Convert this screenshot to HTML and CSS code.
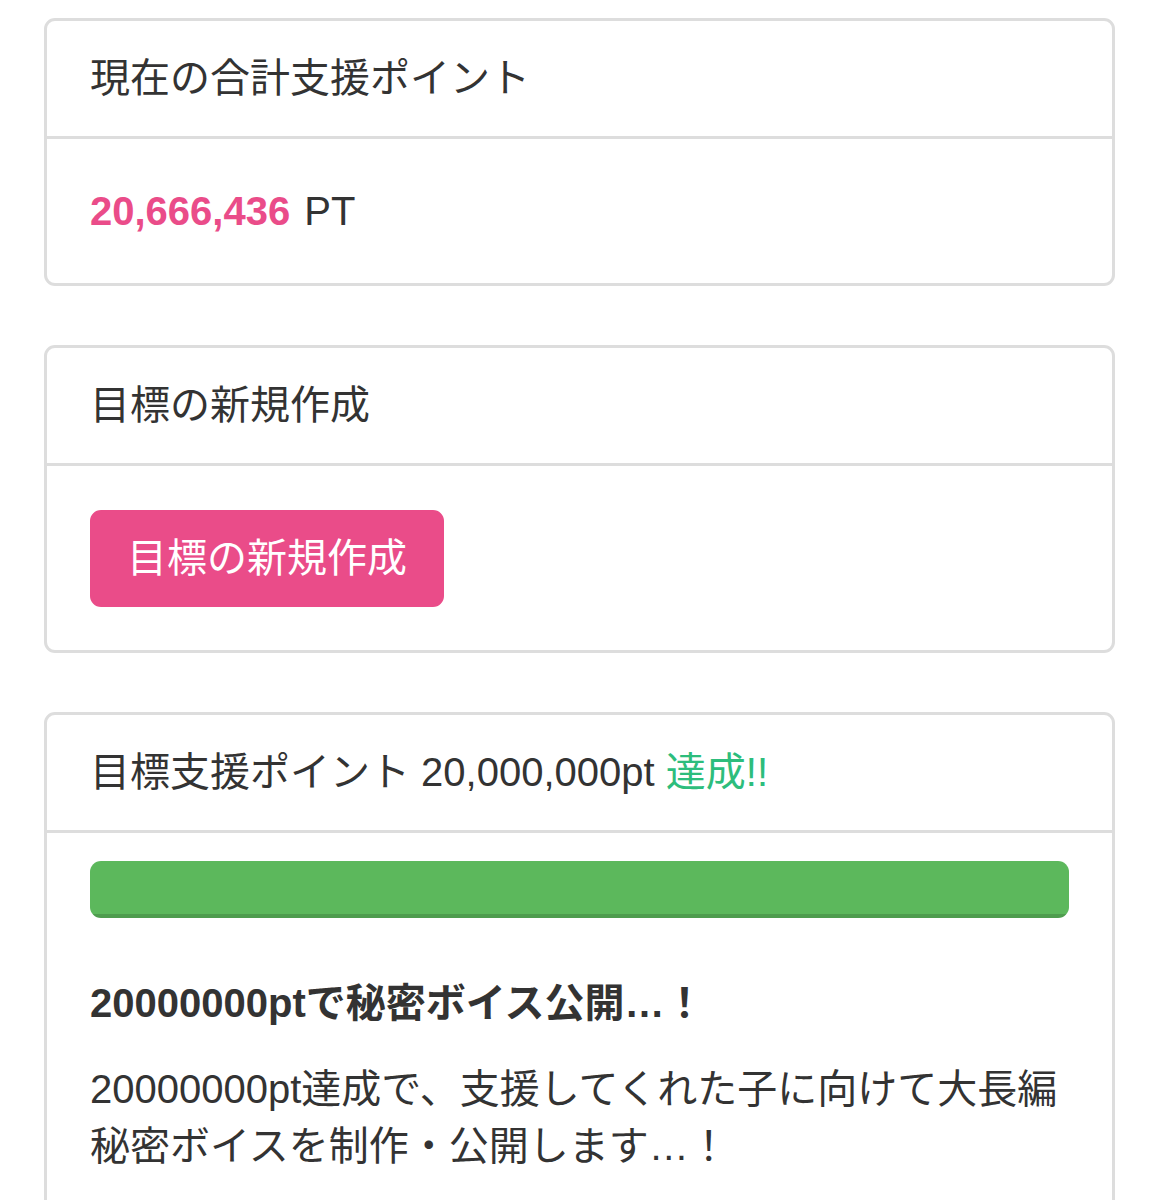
FILE: index.html
```html
<!DOCTYPE html>
<html lang="ja">

<head>
    <meta charset="utf-8">
    <meta name="viewport" content="width=device-width, initial-scale=1.0">
    <title>支援ポイント</title>
    <link rel="stylesheet" href="styles.css">
</head>

<body>
    <div class="container">
        <div class="panel">
            <div class="panel-heading">現在の合計支援ポイント</div>
            <div class="panel-body">
                <span class="point-total">20,666,436</span> PT
            </div>
        </div>

        <div class="panel">
            <div class="panel-heading">目標の新規作成</div>
            <div class="panel-body">
                <button class="btn-pink">目標の新規作成</button>
            </div>
        </div>

        <div class="panel">
            <div class="panel-heading">目標支援ポイント 20,000,000pt <span class="achieved">達成!!</span></div>
            <div class="panel-body goal-body">
                <div class="progress">
                    <div class="progress-bar" style="width: 100%"></div>
                </div>
                <p class="goal-title">20000000ptで秘密ボイス公開…！</p>
                <p>20000000pt達成で、支援してくれた子に向けて大長編秘密ボイスを制作・公開します…！</p>
            </div>
        </div>
    </div>
</body>

</html>
```

FILE: styles.css
```css
:root {
    --text-color: #333;
    --border-color: #ddd;
    --pink: #ea4c89;
    --green-text: #2dbd7c;
    --green-bar: #5cb85c;
}

* {
    box-sizing: border-box;
}

body {
    margin: 0;
    font-family: 'Liberation Sans', 'Noto Sans CJK JP', sans-serif;
    font-size: 40px;
    line-height: 57px;
    color: var(--text-color);
    background: #fff;
}

.container {
    padding: 18px 44px 0 44px;
}

.panel {
    border: 3px solid var(--border-color);
    border-radius: 11px;
    margin-bottom: 59px;
    background: #fff;
}

.panel-heading {
    padding: 29px 43px;
    border-bottom: 3px solid var(--border-color);
}

.panel-body {
    padding: 44px 43px 43px;
}

.point-total {
    color: var(--pink);
    font-weight: bold;
    margin-right: 3px;
}

.btn-pink {
    font-family: inherit;
    font-size: 40px;
    line-height: 57px;
    color: #fff;
    background: var(--pink);
    border: 3px solid var(--pink);
    border-radius: 11px;
    padding: 17px 34px;
    cursor: pointer;
}

.achieved {
    color: var(--green-text);
}

.goal-body {
    padding-top: 28px;
}

.progress {
    height: 57px;
    margin-bottom: 57px;
    background: #f5f5f5;
    border-radius: 11px;
    overflow: hidden;
}

.progress-bar {
    height: 100%;
    background: var(--green-bar);
    box-shadow: inset 0 -4px 0 rgba(0, 0, 0, 0.15);
}

.goal-body p {
    margin: 0 0 29px;
}

.goal-title {
    font-weight: bold;
}
```
